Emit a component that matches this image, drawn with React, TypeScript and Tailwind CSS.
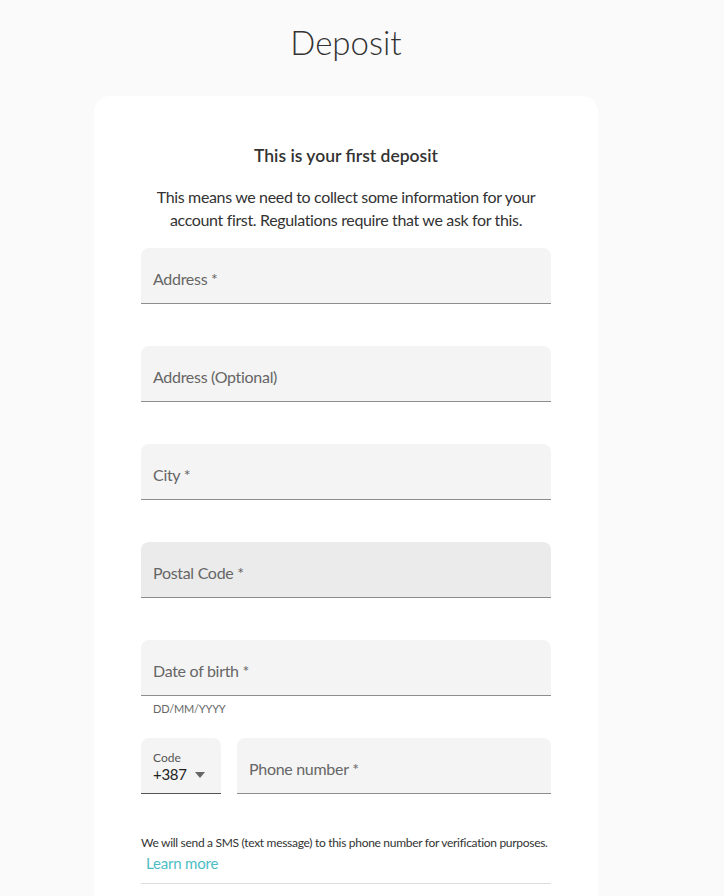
import { useState } from "react";

const fields = [
  { name: "address", label: "Address *" },
  { name: "address2", label: "Address (Optional)" },
  { name: "city", label: "City *" },
  { name: "postal", label: "Postal Code *", hover: true },
  { name: "dob", label: "Date of birth *", helper: "DD/MM/YYYY" },
];

const Field = ({ label, hover, helper }: { label: string; hover?: boolean; helper?: string }) => {
  return (
    <div className="h-[98px]">
      <div
        className={`h-[56px] rounded-t-lg border-b border-[#8d8d8d] px-3 pt-[21px] ${
          hover ? "bg-[#ebebeb]" : "bg-[#f4f4f4]"
        }`}
      >
        <span className="block text-[16px] leading-5 tracking-[-0.3px] text-[#666]">{label}</span>
      </div>
      {helper && <div className="mt-[6px] pl-3 text-[11px] leading-[13px] tracking-[-0.2px] text-[#666]">{helper}</div>}
    </div>
  );
};

const App = () => {
  const [code] = useState("+387");

  return (
    <div className="min-h-screen bg-[#fafafa] pr-[32px] flex flex-col items-center font-['Lato',sans-serif] text-[#333]">
      <h1 className="pt-[20px] text-[33px] leading-[44px] font-light text-[#333]">Deposit</h1>

      <div className="mt-[32px] w-[504px] bg-white rounded-2xl px-[47px] pt-[48px]">
        <h2 className="text-center text-[17.5px] leading-6 font-semibold text-[#333]">
          This is your first deposit
        </h2>
        <p className="mt-[17px] mb-[17px] text-center text-[16px] leading-[23px] tracking-[-0.35px] text-[#333]">
          This means we need to collect some information for your account first. Regulations require that we ask
          for this.
        </p>

        {fields.map((f) => (
          <Field key={f.name} label={f.label} hover={f.hover} helper={f.helper} />
        ))}

        {/* PHONE ROW */}
        <div className="flex gap-4">
          <div className="h-[56px] w-[80px] shrink-0 rounded-t-lg border-b border-[#555] bg-[#f4f4f4] px-3 pt-[13px]">
            <div className="text-[12px] leading-[14px] text-[#555]">Code</div>
            <div className="flex items-center justify-between">
              <span className="text-[15px] leading-[18px] tracking-[-0.3px] text-[#222]">{code}</span>
              <svg width="10" height="6" viewBox="0 0 10 6" className="mr-[4px] mt-[2px]">
                <path d="M0 0h10L5 6z" fill="#666" />
              </svg>
            </div>
          </div>
          <div className="h-[56px] flex-1 rounded-t-lg border-b border-[#8d8d8d] bg-[#f4f4f4] px-3 pt-[21px]">
            <span className="block text-[16px] leading-5 tracking-[-0.3px] text-[#666]">Phone number *</span>
          </div>
        </div>

        <p className="mt-[42px] whitespace-nowrap text-[12px] leading-[14px] tracking-[-0.3px] text-[#333]">
          We will send a SMS (text message) to this phone number for verification purposes.
        </p>
        <a href="#" className="mt-[3px] block pl-[5px] text-[15px] leading-5 tracking-[-0.2px] text-[#4dbdc4]">
          Learn more
        </a>
        <div className="mt-[10px] border-b border-[#ddd]" />
        <div className="h-[40px]" />
      </div>
    </div>
  );
};

export default App;
